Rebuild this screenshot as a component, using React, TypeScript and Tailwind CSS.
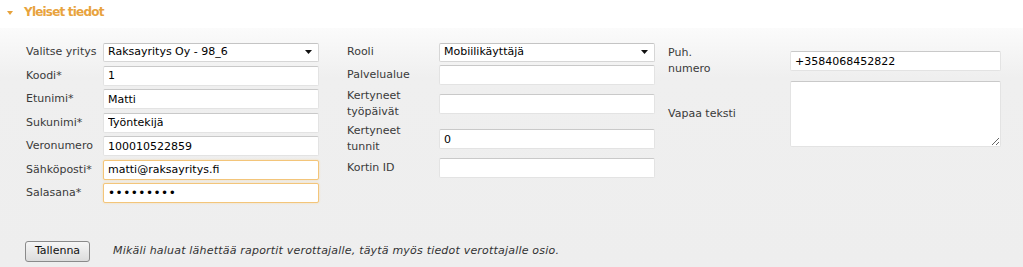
import type { ReactNode } from 'react'

const font = { fontFamily: '"DejaVu Sans", Verdana, sans-serif' }

function Field({ value, highlight, type = 'text' }: { value?: string; highlight?: boolean; type?: string }) {
  return (
    <input
      type={type}
      readOnly
      value={value ?? ''}
      className={
        'block h-[20px] w-full rounded-[2px] bg-white px-[4px] text-black outline-none ' +
        (type === 'password' ? 'text-[12px] tracking-[0.5px] ' : 'text-[11px] ') +
        (highlight
          ? 'border border-[#f3c57a] shadow-[0_0_2px_#f6d7a4]'
          : 'border border-[#e3e3e3] border-t-[#c9c9c9]')
      }
    />
  )
}

function Select({ value }: { value: string }) {
  return (
    <div className="flex h-[19px] w-full items-center justify-between rounded-[2px] border border-[#d6d6d6] border-t-[#c4c4c4] bg-white pl-[4px] pr-[6px] text-[11px] text-black">
      <span>{value}</span>
      <svg width="7" height="4" viewBox="0 0 7 4">
        <path d="M0 0h7L3.5 4z" fill="#111" />
      </svg>
    </div>
  )
}

function Row({ label, labelW, children, tall }: { label: ReactNode; labelW: string; children: ReactNode; tall?: boolean }) {
  return (
    <div className={'flex items-center ' + (tall ? 'min-h-[32px]' : 'min-h-[20px]')}>
      <div className={labelW + ' shrink-0 text-[11px] leading-[16px] text-[#3a3a3a]'}>{label}</div>
      <div className="flex-1">{children}</div>
    </div>
  )
}

export default function App() {
  return (
    <div style={font} className="h-[267px] w-[1023px] overflow-hidden bg-white">
      <div className="flex h-[28px] items-center bg-white pb-[4px] pl-[7px]">
        <svg width="6" height="4" viewBox="0 0 6 4" className="mr-[11px] mt-[1px]">
          <path d="M0 0h6L3 4z" fill="#e6a23c" />
        </svg>
        <span className="text-[12px] font-bold tracking-[-0.8px] text-[#e8a33d]">Yleiset tiedot</span>
      </div>
      <div className="h-[239px] bg-[linear-gradient(to_bottom,#fbfbfb,#efefef_50px,#eeeeee)]">
        <div className="flex pl-[26px] pt-[14px]">
          <div className="flex w-[293px] flex-col gap-[3.5px]">
            <Row label="Valitse yritys" labelW="w-[77px]">
              <Select value="Raksayritys Oy - 98_6" />
            </Row>
            <Row label="Koodi*" labelW="w-[77px]">
              <Field value="1" />
            </Row>
            <Row label="Etunimi*" labelW="w-[77px]">
              <Field value="Matti" />
            </Row>
            <Row label="Sukunimi*" labelW="w-[77px]">
              <Field value="Työntekijä" />
            </Row>
            <Row label="Veronumero" labelW="w-[77px]">
              <Field value="100010522859" />
            </Row>
            <Row label="Sähköposti*" labelW="w-[77px]">
              <Field value="matti@raksayritys.fi" highlight />
            </Row>
            <Row label="Salasana*" labelW="w-[77px]">
              <Field value="password1" type="password" highlight />
            </Row>
          </div>
          <div className="ml-[28px] flex w-[308px] flex-col gap-[3px]">
            <Row label="Rooli" labelW="w-[92px]">
              <Select value="Mobiilikäyttäjä" />
            </Row>
            <Row label="Palvelualue" labelW="w-[92px]">
              <Field />
            </Row>
            <Row label={<>Kertyneet<br />työpäivät</>} labelW="w-[92px]" tall>
              <Field />
            </Row>
            <Row label={<>Kertyneet<br />tunnit</>} labelW="w-[92px]" tall>
              <Field value="0" />
            </Row>
            <Row label="Kortin ID" labelW="w-[92px]">
              <Field />
            </Row>
          </div>
          <div className="ml-[13px] flex w-[333px] flex-col gap-[4px] pt-[3px]">
            <Row label={<>Puh.<br />numero</>} labelW="w-[122px]" tall>
              <Field value="+3584068452822" />
            </Row>
            <Row label="Vapaa teksti" labelW="w-[122px]">
              <textarea
                readOnly
                className="block h-[66px] w-full resize rounded-[2px] border border-[#e3e3e3] border-t-[#c9c9c9] bg-white outline-none"
              />
            </Row>
          </div>
        </div>
        <div className="mt-[38px] flex items-center pl-[25px]">
          <button className="h-[21px] w-[65px] rounded-[3px] border border-[#8a8a8a] bg-[linear-gradient(to_bottom,#f6f6f6,#dcdcdc)] text-[11px] text-[#111]">
            Tallenna
          </button>
          <span className="ml-[23px] text-[11px] italic tracking-[0.2px] text-[#333]">
            Mikäli haluat lähettää raportit verottajalle, täytä myös tiedot verottajalle osio.
          </span>
        </div>
      </div>
    </div>
  )
}
